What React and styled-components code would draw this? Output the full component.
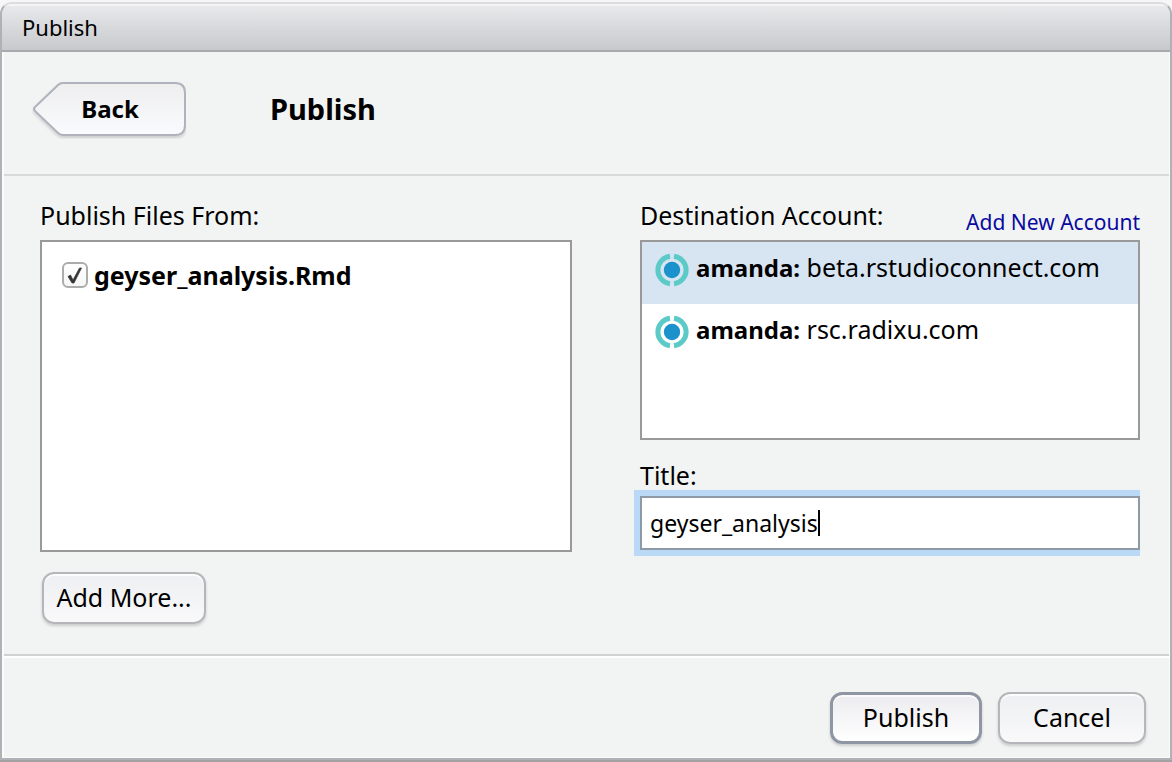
import React, { useLayoutEffect, useRef, useState } from "react";
import styled, { createGlobalStyle } from "styled-components";

const GlobalStyle = createGlobalStyle`
  * { box-sizing: border-box; }
  body {
    margin: 0;
    background: #fbfbfb;
    color: #000;
    font-family: "Noto Sans", "Open Sans", sans-serif;
    font-size: 25px;
    line-height: 32px;
  }
  button, input { font: inherit; color: inherit; }
`;

const Page = styled.div`
  display: flex;
  min-height: 100vh;
  padding: 2px 0;
  background: linear-gradient(to top, #a3a1a3 0, #a3a1a3 2px, #f6f6f7 20px);
`;

const Dialog = styled.main`
  flex: 1;
  display: flex;
  flex-direction: column;
  border: 2px solid #b0b0b6;
  border-top-color: #dcdcde;
  border-radius: 12px 12px 0 0;
  background: #f2f4f4;
  overflow: hidden;
`;

const TitleBar = styled.header`
  height: 48px;
  padding: 7px 20px;
  border-bottom: 2px solid #a9aaad;
  background: linear-gradient(#e9eaec, #c8c9cc);
  box-shadow: inset 0 2px 0 #f4f4f5;
  font-size: 22px;
`;

const Content = styled.div`
  flex: 1;
  display: flex;
  flex-direction: column;
  border: solid #fbfbfc;
  border-width: 0 1px 1px 2px;
`;

const PageHeader = styled.div`
  display: flex;
  align-items: center;
  gap: 84px;
  height: 124px;
  padding: 0 28px 8px;
  border-bottom: 2px solid #d8dad9;
`;

const Heading = styled.h1`
  margin: 0;
  font-size: 29px;
  line-height: 32px;
  font-weight: 700;
`;

const BackButton = styled.button`
  display: grid;
  place-items: center;
  width: 154px;
  height: 60px;
  padding: 0;
  border: 0;
  background: none;
  font-size: 24px;
  font-weight: 700;
  > * { grid-area: 1 / 1; }
  span { padding-left: 2px; }
`;

const FormGrid = styled.div`
  flex: 1;
  display: grid;
  grid-template-columns: 532fr 500fr;
  gap: 68px;
  align-items: start;
  padding: 23px 29px 30px 36px;
`;

const Column = styled.section`
  display: flex;
  flex-direction: column;
  align-items: stretch;
  min-width: 0;
`;

const LabelRow = styled.div`
  display: flex;
  justify-content: space-between;
  height: 41px;
`;

const AccountLink = styled.a`
  padding-top: 7px;
  color: #0a0aa0;
  font-size: 21px;
  text-decoration: none;
`;

const Panel = styled.div`
  height: ${(p) => p.$height}px;
  border: 2px solid #999;
  background: #fff;
`;

const FileRow = styled.label`
  display: flex;
  align-items: center;
  gap: 6px;
  padding: 17px 20px;
  font-weight: 700;
`;

const TickHolder = styled.span`
  display: grid;
  > * { grid-area: 1 / 1; }
  svg { pointer-events: none; }
  input:not(:checked) + svg { visibility: hidden; }
`;

const Tick = styled.input`
  appearance: none;
  width: 26px;
  height: 26px;
  margin: 0;
  border: 2px solid #acacac;
  border-radius: 6px;
  background: linear-gradient(#fff, #f6f6f6);
`;

const AccountRow = styled.button`
  display: flex;
  align-items: flex-start;
  gap: 7px;
  width: 100%;
  height: 62px;
  padding: 9px 13px;
  border: 0;
  background: ${(p) => (p.$selected ? "#d7e4f1" : "transparent")};
  text-align: left;
  b { font-size: 24px; }
  svg { flex: none; margin-top: 2px; }
`;

const TitleLabel = styled.label`
  padding-top: 19px;
  height: 56px;
`;

const InputFrame = styled.div`
  position: relative;
  clip-path: inset(-8px 0 -8px -8px);
`;

const TitleInput = styled.input`
  display: block;
  width: 100%;
  height: 54px;
  padding: 0 8px;
  border: 2px solid #8e99a6;
  border-radius: 0;
  outline: 0;
  background: #fff;
  box-shadow: 0 0 0 6px #bad9f7;
  caret-color: transparent;
  font-size: 23px;
`;

const Caret = styled.span`
  position: absolute;
  top: 14px;
  width: 2px;
  height: 26px;
  background: #000;
  pointer-events: none;
`;

const Button = styled.button`
  width: ${(p) => p.$width}px;
  height: 52px;
  padding: 0 0 2px;
  border: ${(p) => (p.$primary ? "3px solid #8f96a3" : "2px solid #b5b6b9")};
  border-radius: 12px;
  background: ${(p) => (p.$primary ? "linear-gradient(#ececf0, #fff)" : "linear-gradient(#eeeff2, #f9f9fa)")};
  box-shadow: 0 2px 3px rgba(0, 0, 0, 0.16), inset 0 2px 0 rgba(255, 255, 255, 0.8);
`;

const AddRow = styled.div`
  padding: 20px 2px 0;
`;

const Footer = styled.footer`
  display: flex;
  justify-content: flex-end;
  gap: 16px;
  padding: 36px 23px 13px;
  border-top: 2px solid #d0d2d1;
  box-shadow: inset 0 2px 0 #fff;
`;

function BackShape() {
  return (
    <svg width="154" height="60" viewBox="0 0 154 60" aria-hidden="true">
      <defs>
        <linearGradient id="backFill" x1="0" y1="0" x2="0" y2="1">
          <stop offset="0" stopColor="#eeeeef" />
          <stop offset="1" stopColor="#fafbfe" />
        </linearGradient>
        <filter id="backShadow" x="-5%" y="-5%" width="110%" height="120%">
          <feDropShadow dx="0" dy="2" stdDeviation="1.5" floodOpacity="0.16" />
        </filter>
      </defs>
      <path
        d="M31 4H143Q153 4 153 14V46Q153 56 143 56H31Q28 56 26 54L3 32Q1 30 3 28L26 6Q28 4 31 4Z"
        fill="url(#backFill)"
        stroke="#b0b3bb"
        strokeWidth="2"
        filter="url(#backShadow)"
      />
    </svg>
  );
}

function CheckMark() {
  return (
    <svg width="26" height="26" viewBox="0 0 26 26" aria-hidden="true">
      <path d="M6 14.5L8.5 13L11 18L17.5 6H19.5L12 21H10Z" fill="#333" stroke="#333" strokeWidth="0.7" />
    </svg>
  );
}

function ConnectIcon() {
  return (
    <svg width="34" height="34" viewBox="0 0 34 34" aria-hidden="true">
      <path d="M15 3.3A13.8 13.8 0 0 0 15 30.7M19 3.3A13.8 13.8 0 0 1 19 30.7" fill="none" stroke="#5ccbc8" strokeWidth="5" />
      <circle cx="17" cy="17" r="8.2" fill="#1c92cc" />
    </svg>
  );
}

const accounts = ["beta.rstudioconnect.com", "rsc.radixu.com"];

export default function App() {
  const [selected, setSelected] = useState(0);
  const [title, setTitle] = useState("geyser_analysis");
  const [caretX, setCaretX] = useState(10);
  const inputRef = useRef(null);

  useLayoutEffect(() => {
    const style = getComputedStyle(inputRef.current);
    const context = document.createElement("canvas").getContext("2d");
    context.font = `${style.fontSize} ${style.fontFamily}`;
    setCaretX(10 + Math.round(context.measureText(title).width));
  }, [title]);

  return (
    <>
      <GlobalStyle />
      <Page>
        <Dialog>
          <TitleBar>Publish</TitleBar>
          <Content>
            <PageHeader>
              <BackButton type="button">
                <BackShape />
                <span>Back</span>
              </BackButton>
              <Heading>Publish</Heading>
            </PageHeader>
            <FormGrid>
              <Column>
                <LabelRow>Publish Files From:</LabelRow>
                <Panel $height={312}>
                  <FileRow>
                    <TickHolder>
                      <Tick type="checkbox" defaultChecked />
                      <CheckMark />
                    </TickHolder>
                    geyser_analysis.Rmd
                  </FileRow>
                </Panel>
                <AddRow>
                  <Button type="button" $width={164}>Add More...</Button>
                </AddRow>
              </Column>
              <Column>
                <LabelRow>
                  <span>Destination Account:</span>
                  <AccountLink href="#add-account">Add New Account</AccountLink>
                </LabelRow>
                <Panel $height={200}>
                  {accounts.map((host, index) => (
                    <AccountRow
                      key={host}
                      type="button"
                      $selected={selected === index}
                      aria-pressed={selected === index}
                      onClick={() => setSelected(index)}
                    >
                      <ConnectIcon />
                      <span><b>amanda:</b> {host}</span>
                    </AccountRow>
                  ))}
                </Panel>
                <TitleLabel htmlFor="title">Title:</TitleLabel>
                <InputFrame>
                  <TitleInput id="title" ref={inputRef} value={title} onChange={(e) => setTitle(e.target.value)} />
                  <Caret style={{ left: caretX }} />
                </InputFrame>
              </Column>
            </FormGrid>
            <Footer>
              <Button type="button" $width={152} $primary>Publish</Button>
              <Button type="button" $width={148}>Cancel</Button>
            </Footer>
          </Content>
        </Dialog>
      </Page>
    </>
  );
}
